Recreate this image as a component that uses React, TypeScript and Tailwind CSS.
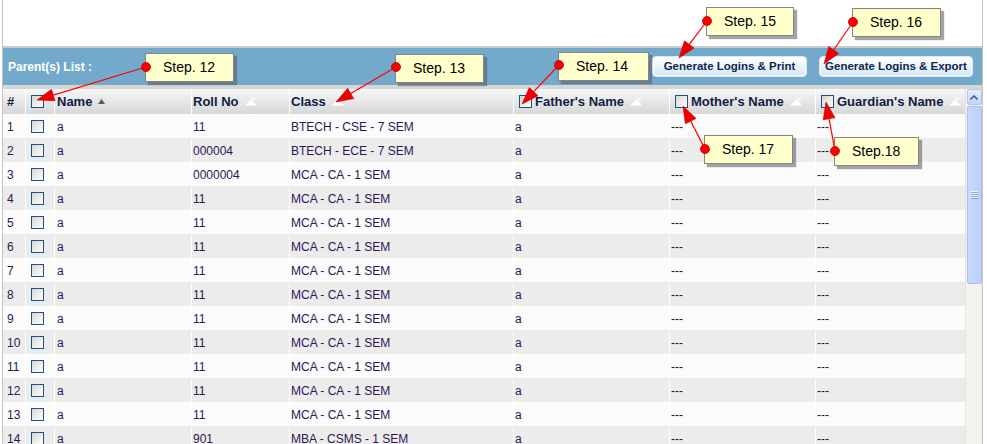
import React from "react";

type Pt = [number, number];

const ROWS: [string, string, string][] = [
  ["1", "11", "BTECH - CSE - 7 SEM"],
  ["2", "000004", "BTECH - ECE - 7 SEM"],
  ["3", "0000004", "MCA - CA - 1 SEM"],
  ["4", "11", "MCA - CA - 1 SEM"],
  ["5", "11", "MCA - CA - 1 SEM"],
  ["6", "11", "MCA - CA - 1 SEM"],
  ["7", "11", "MCA - CA - 1 SEM"],
  ["8", "11", "MCA - CA - 1 SEM"],
  ["9", "11", "MCA - CA - 1 SEM"],
  ["10", "11", "MCA - CA - 1 SEM"],
  ["11", "11", "MCA - CA - 1 SEM"],
  ["12", "11", "MCA - CA - 1 SEM"],
  ["13", "11", "MCA - CA - 1 SEM"],
  ["14", "901", "MBA - CSMS - 1 SEM"],
];

const CALLOUTS: { label: string; box: string; dot: Pt; tip: Pt }[] = [
  { label: "Step. 12", box: "left-[145px] top-[53px] w-[89px]", dot: [146, 67], tip: [37, 100] },
  { label: "Step. 13", box: "left-[395px] top-[54px] w-[89px]", dot: [396, 67], tip: [336, 102] },
  { label: "Step. 14", box: "left-[558px] top-[52px] w-[91px]", dot: [559, 65], tip: [522, 104] },
  { label: "Step. 15", box: "left-[706px] top-[7px] w-[88px]", dot: [707, 21], tip: [679, 58] },
  { label: "Step. 16", box: "left-[852px] top-[8px] w-[89px]", dot: [853, 22], tip: [824, 64] },
  { label: "Step. 17", box: "left-[704px] top-[135px] w-[89px]", dot: [705, 149], tip: [683, 106] },
  { label: "Step.18", box: "left-[834px] top-[137px] w-[85px]", dot: [835, 151], tip: [826, 102] },
];

const COLS = "grid grid-cols-[22px_29px_137px_98px_224px_156px_146px_150px]";

function Check() {
  return (
    <span className="inline-block h-[13px] w-[13px] shrink-0 border border-[#1c5180] bg-linear-to-br from-[#d6d6d0] to-white" />
  );
}

function SortBoth() {
  return (
    <svg width="13" height="9" viewBox="0 0 13 9" className="ml-[6px] shrink-0">
      <polygon points="4,0.5 13,0.5 8.5,5" fill="#ffffff" opacity="0.55" />
      <polygon points="0,8.5 6,2.5 12,8.5" fill="#ffffff" />
    </svg>
  );
}

function SortUp() {
  return (
    <span className="ml-[5px] flex h-[8px] w-[9px] items-center justify-center bg-[#e4e4e4]">
      <svg width="7" height="5" viewBox="0 0 7 5">
        <polygon points="0,5 3.5,0 7,5" fill="#5a5a5a" />
      </svg>
    </span>
  );
}

function Arrow({ from, to }: { from: Pt; to: Pt }) {
  const dx = from[0] - to[0];
  const dy = from[1] - to[1];
  const len = Math.hypot(dx, dy);
  const ux = dx / len;
  const uy = dy / len;
  const bx = to[0] + ux * 17;
  const by = to[1] + uy * 17;
  const px = -uy * 6;
  const py = ux * 6;
  return (
    <g>
      <line x1={from[0]} y1={from[1]} x2={bx} y2={by} stroke="#ff0000" strokeWidth="1.2" />
      <polygon
        points={`${to[0]},${to[1]} ${bx + px},${by + py} ${bx - px},${by - py}`}
        fill="#ee0000"
        stroke="#c00000"
        strokeWidth="0.6"
      />
      <circle cx={from[0]} cy={from[1]} r="4.5" fill="#ff0000" stroke="#b00000" strokeWidth="0.8" />
    </g>
  );
}

function Button({ children, w }: { children: React.ReactNode; w: string }) {
  return (
    <button
      type="button"
      className={`h-[21px] ${w} rounded-[4px] border border-[#d9e8f5] bg-linear-to-b from-white to-[#d6e7f7] text-[11.5px] font-bold text-[#10264f] shadow-[inset_0_0_0_1px_rgba(255,255,255,0.8)]`}
    >
      {children}
    </button>
  );
}

export default function App() {
  return (
    <div className="relative h-[444px] w-[987px] overflow-hidden bg-white font-['Liberation_Sans',Arial,sans-serif]">
      <div className="ml-[2px] flex h-full w-[981px] flex-col border-x border-[#c3c3c3]">
        <div className="h-[46px] shrink-0" />
        <div className="h-[2px] shrink-0 bg-[#c9c9c9]" />

        <div className="flex h-[37px] shrink-0 items-center justify-between bg-[#73a9ca] pl-[5px] pr-[9px]">
          <span className="text-[12px] font-bold text-white">Parent(s) List :</span>
          <div className="flex items-center gap-[12px]">
            <Button w="w-[155px]">Generate Logins &amp; Print</Button>
            <Button w="w-[154px]">Generate Logins &amp; Export</Button>
          </div>
        </div>
        <div className="h-[4px] shrink-0 bg-[#d6d6d6]" />

        <div className="flex min-h-0 flex-1">
          <div className="w-[962px] shrink-0">
            {/* header */}
            <div
              className={`${COLS} h-[25px] bg-linear-to-b from-[#f7f7f7] to-[#d7d7d7] text-[13px] font-bold text-[#0f1d45]`}
            >
              <div className="flex items-center pl-[4px]">#</div>
              <div className="flex items-center border-l border-white pl-[5px]">
                <Check />
              </div>
              <div className="flex items-center border-l border-white pl-[2px]">
                Name
                <SortUp />
              </div>
              <div className="flex items-center border-l border-white pl-[1px]">
                Roll No
                <SortBoth />
              </div>
              <div className="flex items-center border-l border-white pl-[1px]">
                Class
                <SortBoth />
              </div>
              <div className="flex items-center border-l border-white pl-[5px]">
                <Check />
                <span className="ml-[3px]">Father's Name</span>
                <SortBoth />
              </div>
              <div className="flex items-center border-l border-white pl-[5px]">
                <Check />
                <span className="ml-[3px]">Mother's Name</span>
                <SortBoth />
              </div>
              <div className="flex items-center border-l border-white pl-[5px]">
                <Check />
                <span className="ml-[3px]">Guardian's Name</span>
                <SortBoth />
              </div>
            </div>

            {/* rows */}
            {ROWS.map(([n, roll, cls], i) => (
              <div
                key={n}
                className={`${COLS} h-[24px] pt-[1px] text-[12px] text-[#2e1656] ${
                  i % 2 === 0 ? "bg-[#fbfbfb]" : "bg-[#ececec]"
                }`}
              >
                <div className="flex items-center pl-[4px]">{n}</div>
                <div className="flex items-center border-l border-white pl-[5px]">
                  <Check />
                </div>
                <div className="flex items-center border-l border-white pl-[2px]">a</div>
                <div className="flex items-center border-l border-white pl-[1px]">{roll}</div>
                <div className="flex items-center border-l border-white pl-[1px]">{cls}</div>
                <div className="flex items-center border-l border-white pl-[1px]">a</div>
                <div className="flex items-center border-l border-white pl-[1px] text-[#1a1a1a]">---</div>
                <div className="flex items-center border-l border-white pl-[1px] text-[#1a1a1a]">---</div>
              </div>
            ))}
          </div>

          {/* scrollbar */}
          <div className="flex w-[17px] shrink-0 flex-col items-center border-l border-[#e6e4da] bg-[#f4f3ee]">
            <div className="flex h-[16px] w-[15px] items-center justify-center rounded-[2px] border border-[#b2c6f4] bg-linear-to-b from-[#e6eefe] to-[#c3d4fb]">
              <svg width="8" height="5" viewBox="0 0 8 5">
                <polyline points="0.5,4.5 4,1 7.5,4.5" fill="none" stroke="#4d6185" strokeWidth="1.6" />
              </svg>
            </div>
            <div className="mt-[1px] flex h-[178px] w-[15px] items-center justify-center rounded-[2px] border border-[#a9bff0] bg-linear-to-r from-[#c9d8fd] to-[#bccffb]">
              <svg width="8" height="8" viewBox="0 0 8 8">
                <rect x="0" y="0" width="8" height="1" fill="#eef3ff" />
                <rect x="0" y="2" width="8" height="1" fill="#eef3ff" />
                <rect x="0" y="4" width="8" height="1" fill="#eef3ff" />
                <rect x="0" y="6" width="8" height="1" fill="#eef3ff" />
                <rect x="1" y="1" width="8" height="1" fill="#8ca6dd" />
                <rect x="1" y="3" width="8" height="1" fill="#8ca6dd" />
                <rect x="1" y="5" width="8" height="1" fill="#8ca6dd" />
                <rect x="1" y="7" width="8" height="1" fill="#8ca6dd" />
              </svg>
            </div>
          </div>
        </div>
      </div>

      {/* callouts */}
      {CALLOUTS.map((c) => (
        <div
          key={c.label}
          className={`absolute ${c.box} flex h-[29px] items-center border border-[#858585] bg-[#ffffcc] pl-[17px] text-[14px] text-black shadow-[3px_3px_1px_rgba(90,90,90,0.55)]`}
        >
          {c.label}
        </div>
      ))}
      <svg className="pointer-events-none absolute left-0 top-0" width="987" height="444">
        {CALLOUTS.map((c) => (
          <Arrow key={c.label} from={c.dot} to={c.tip} />
        ))}
      </svg>
    </div>
  );
}
